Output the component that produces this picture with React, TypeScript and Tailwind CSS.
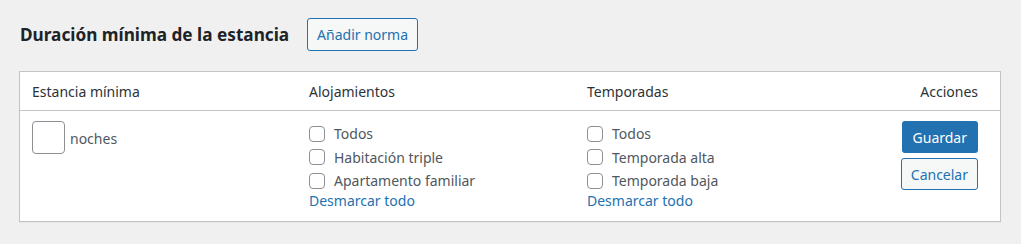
import React from 'react';

const font = { fontFamily: '"Noto Sans", "Open Sans", sans-serif' };

const CheckList = ({ items }: { items: string[] }) => (
    <div className="flex flex-col">
        {items.map((label) => (
            <label key={label} className="flex items-center h-[23.5px] text-[14px] text-[#50575e] mt-[1px] mb-[-1px]">
                <span className="w-4 h-4 border border-[#8c8f94] rounded-[4px] bg-white mr-[9px] shrink-0" />
                {label}
            </label>
        ))}
        <a className="text-[14px] text-[#2271b1] leading-[22px] mt-[-2px]">Desmarcar todo</a>
    </div>
);

export default function App() {
    return (
        <div className="min-h-screen bg-[#f0f0f1] pl-[19px] pr-[20px] pt-[18px]" style={font}>
            <div className="flex items-center gap-[18px] h-[33px]">
                <h2 className="text-[17.2px] font-bold text-[#1d2327] pl-[1px]">Duración mínima de la estancia</h2>
                <button className="h-[33px] px-[9px] border border-[#2271b1] rounded-[3px] bg-[#f6f7f7] text-[#2271b1] text-[14px]">
                    Añadir norma
                </button>
            </div>
            <div className="mt-[20px] w-[982px] bg-white border border-[#c3c4c7] shadow-[0_1px_1px_rgba(0,0,0,0.04)]">
                <div className="grid grid-cols-[277px_278px_1fr_auto] h-[39px] items-center border-b border-[#c3c4c7] text-[14px] text-[#2c3338] pl-[12px] pr-[22px]">
                    <div>Estancia mínima</div>
                    <div>Alojamientos</div>
                    <div>Temporadas</div>
                    <div className="text-right">Acciones</div>
                </div>
                <div className="grid grid-cols-[277px_278px_1fr_auto] pl-[12px] pr-[22px] pt-[10px] pb-[9px]">
                    <div className="flex items-start">
                        <span className="w-[33px] h-[33px] border border-[#8c8f94] rounded-[4px] bg-white" />
                        <span className="ml-[5px] mt-[7px] text-[14px] text-[#50575e]">noches</span>
                    </div>
                    <CheckList items={['Todos', 'Habitación triple', 'Apartamento familiar']} />
                    <CheckList items={['Todos', 'Temporada alta', 'Temporada baja']} />
                    <div className="flex flex-col items-end gap-[5px]">
                        <button className="h-[32px] px-[11px] rounded-[3px] bg-[#2271b1] text-white text-[14px]">Guardar</button>
                        <button className="h-[32px] px-[9px] rounded-[3px] border border-[#2271b1] bg-[#f6f7f7] text-[#2271b1] text-[14px]">Cancelar</button>
                    </div>
                </div>
            </div>
        </div>
    );
}
